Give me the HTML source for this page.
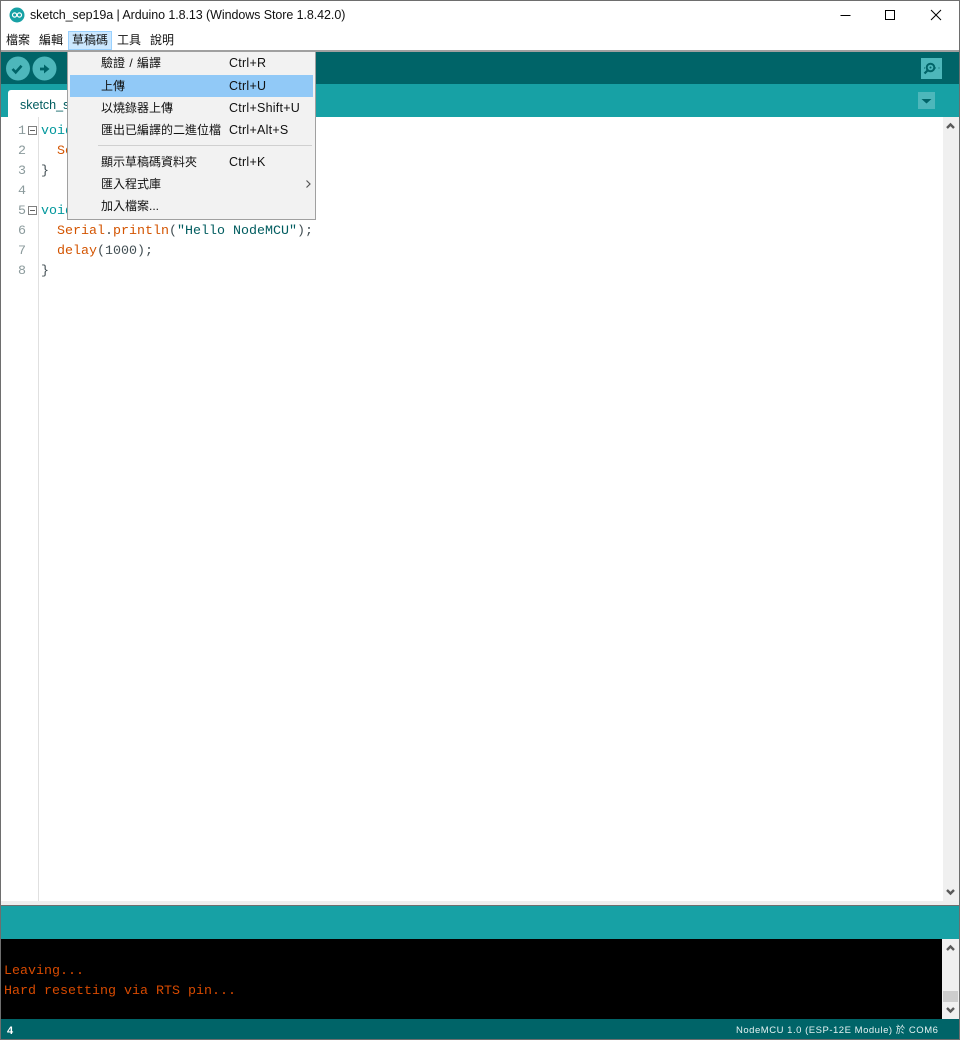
<!DOCTYPE html>
<html lang="zh-Hant"><head><meta charset="utf-8"><title>sketch_sep19a | Arduino 1.8.13</title>
<style>
*{box-sizing:border-box}
html,body{margin:0;padding:0;background:#fff}
body{width:960px;height:1040px;position:relative;overflow:hidden;font-family:"Liberation Sans","Noto Sans CJK TC",sans-serif;font-size:12px;color:#000}
.a{position:absolute}
.t{position:absolute;white-space:pre;line-height:20px}
.m{font-family:"Liberation Mono",monospace;font-size:13.333px;line-height:20px;white-space:pre;position:absolute}
.g{color:#8b9a9c;font-family:"Liberation Mono",monospace;font-size:13.333px;line-height:20px;position:absolute;left:18px}
.o{color:#d35400}.k{color:#00979c}.s{color:#005c5f}.c{color:#434f54}
.mi{position:absolute;left:101px;font-size:12px;line-height:20px;color:#111;white-space:pre}
.ms{position:absolute;left:229px;font-size:12.5px;letter-spacing:.25px;line-height:20px;color:#111;white-space:pre}
.fold{position:absolute;left:28px;width:9px;height:9px;border:1px solid #808080;background:#fff}
.fold:after{content:"";position:absolute;left:1px;top:3px;width:5px;height:1px;background:#606060}
</style></head><body>
<!-- window border -->
<div class="a" style="left:0;top:0;width:960px;height:1px;background:#6e6e6e;z-index:9"></div>
<div class="a" style="left:0;top:0;width:1px;height:1040px;background:#6e6e6e;z-index:9"></div>
<div class="a" style="left:959px;top:0;width:1px;height:1040px;background:#6e6e6e;z-index:9"></div>
<div class="a" style="left:0;top:1039px;width:960px;height:1px;background:#6e6e6e;z-index:9"></div>
<!-- title -->
<svg class="a" style="left:9px;top:7px" width="16" height="16" viewBox="0 0 16 16"><circle cx="8" cy="8" r="7.5" fill="#17a1a5"/><circle cx="5.6" cy="8" r="2.1" fill="none" stroke="#fff" stroke-width="1.2"/><circle cx="10.4" cy="8" r="2.1" fill="none" stroke="#fff" stroke-width="1.2"/></svg>
<div class="t" style="left:30px;top:5px;font-size:12.5px;letter-spacing:-.075px;color:#111">sketch_sep19a | Arduino 1.8.13 (Windows Store 1.8.42.0)</div>
<svg class="a" style="left:835px;top:8px" width="115" height="16" viewBox="0 0 115 16"><path d="M5.500 7.500H15.500" stroke="#000" fill="none"/><rect x="50.500" y="2.500" width="9" height="9" fill="none" stroke="#000"/><path d="M96 2L106 12M106 2L96 12" stroke="#000" fill="none"/></svg>
<!-- menubar -->
<div class="a" style="left:68px;top:31px;width:44px;height:19px;background:#cce8ff;border:1px solid #99d1ff"></div>
<div class="t" style="left:6px;top:30px;color:#111">檔案</div>
<div class="t" style="left:39px;top:30px;color:#111">編輯</div>
<div class="t" style="left:72px;top:30px;color:#111">草稿碼</div>
<div class="t" style="left:117px;top:30px;color:#111">工具</div>
<div class="t" style="left:150px;top:30px;color:#111">說明</div>
<div class="a" style="left:0;top:50px;width:960px;height:2px;background:#a0a0a0"></div>
<!-- toolbar -->
<div class="a" style="left:0;top:52px;width:960px;height:32px;background:#006468"></div>
<svg class="a" style="left:5px;top:55px" width="54" height="27" viewBox="0 0 54 27"><circle cx="13" cy="13.500" r="12" fill="#4db7bb"/><path d="M7.500 14L10.700 17.300L16.500 10.800" fill="none" stroke="#006468" stroke-width="2.600"/><circle cx="39.500" cy="13.500" r="12" fill="#4db7bb"/><path d="M35 14H40" fill="none" stroke="#006468" stroke-width="2.800"/><path d="M39 9.500L44.500 14L39 18.500Z" fill="#006468"/></svg>
<div class="a" style="left:921px;top:58px;width:21px;height:21px;background:#4db7bb"></div>
<svg class="a" style="left:921px;top:58px" width="21" height="21" viewBox="0 0 21 21"><circle cx="9.500" cy="9.500" r="3.800" fill="none" stroke="#006468" stroke-width="2"/><circle cx="9.500" cy="9.500" r="1" fill="#006468"/><path d="M6.500 12.500L3.500 15.500" stroke="#006468" stroke-width="2.200"/><path d="M3 10H4M14 10H15M17.500 10H18.500" stroke="#006468"/></svg>
<!-- tab strip -->
<div class="a" style="left:0;top:84px;width:960px;height:33px;background:#17a1a5"></div>
<div class="a" style="left:8px;top:90px;width:70px;height:27px;background:#fff;border-radius:3px 3px 0 0"></div>
<div class="t" style="left:20px;top:95px;font-size:12.5px;color:#005c5f">sketch_s</div>
<div class="a" style="left:918px;top:92px;width:17px;height:17px;background:#4db7bb"></div>
<svg class="a" style="left:918px;top:92px" width="17" height="17"><path d="M3.500 7H13.500L8.500 11.500Z" fill="#006468"/></svg>
<!-- editor -->
<div class="a" style="left:1px;top:117px;width:942px;height:786px;background:#fff"></div>
<div class="a" style="left:38px;top:117px;width:1px;height:784px;background:#e0e0e0"></div>
<div class="g" style="top:122px">1</div><div class="g" style="top:142px">2</div><div class="g" style="top:162px">3</div><div class="g" style="top:182px">4</div><div class="g" style="top:202px">5</div><div class="g" style="top:222px">6</div><div class="g" style="top:242px">7</div><div class="g" style="top:262px">8</div>
<div class="fold" style="top:126px"></div><div class="fold" style="top:206px"></div>
<div class="m k" style="left:41px;top:122px">void</div>
<div class="m o" style="left:57px;top:142px">Se</div>
<div class="m c" style="left:41px;top:162px">}</div>
<div class="m k" style="left:41px;top:202px">void</div>
<div class="m" style="left:57px;top:222px"><span class="o">Serial</span><span class="c">.</span><span class="o">println</span><span class="c">(</span><span class="s">"Hello NodeMCU"</span><span class="c">);</span></div>
<div class="m" style="left:57px;top:242px"><span class="o">delay</span><span class="c">(1000);</span></div>
<div class="m c" style="left:41px;top:262px">}</div>
<!-- editor scrollbar -->
<div class="a" style="left:943px;top:117px;width:16px;height:786px;background:#f0f0f0"></div>
<svg class="a" style="left:943px;top:117px" width="16" height="786"><path d="M4 11L7.500 7.500L11 11" fill="none" stroke="#5a5a5a" stroke-width="2.400"/><path d="M4 773L7.500 776.500L11 773" fill="none" stroke="#5a5a5a" stroke-width="2.400"/></svg>
<div class="a" style="left:1px;top:901px;width:958px;height:4px;background:#eeeeee"></div>
<div class="a" style="left:1px;top:905px;width:958px;height:1px;background:#6e6e6e"></div>
<!-- message strip -->
<div class="a" style="left:0;top:906px;width:960px;height:33px;background:#17a1a5"></div>
<!-- console -->
<div class="a" style="left:0;top:939px;width:942px;height:80px;background:#000"></div>
<div class="m" style="left:4px;top:962px;color:#d84a00">Leaving...</div>
<div class="m" style="left:4px;top:982px;color:#d84a00">Hard resetting via RTS pin...</div>
<div class="a" style="left:942px;top:939px;width:17px;height:80px;background:#f0f0f0"></div>
<svg class="a" style="left:942px;top:939px" width="17" height="80"><path d="M5 11L8.500 7.500L12 11" fill="none" stroke="#5a5a5a" stroke-width="2.400"/><rect x="1" y="52" width="15" height="11" fill="#cdcdcd"/><path d="M5 69L8.500 72.500L12 69" fill="none" stroke="#5a5a5a" stroke-width="2.400"/></svg>
<!-- status -->
<div class="a" style="left:0;top:1019px;width:960px;height:20px;background:#006468"></div>
<div class="t" style="left:7px;top:1021px;font-size:11px;font-weight:bold;line-height:20px;color:#fff;font-family:'Liberation Sans',sans-serif">4</div>
<div class="t" style="left:736px;top:1021px;font-size:9.500px;letter-spacing:.52px;color:#e4f2f2">NodeMCU 1.0 (ESP-12E Module) 於 COM6</div>
<!-- dropdown -->
<div class="a" style="left:67px;top:51px;width:249px;height:169px;background:#f2f2f2;border:1px solid #a0a0a0;z-index:5"></div>
<div style="position:absolute;left:0;top:0;z-index:6">
<div class="a" style="left:70px;top:75px;width:243px;height:22px;background:#91c9f7"></div>
<div class="mi" style="top:53px;word-spacing:1px">驗證 / 編譯</div><div class="ms" style="top:53px">Ctrl+R</div>
<div class="mi" style="top:76px">上傳</div><div class="ms" style="top:76px">Ctrl+U</div>
<div class="mi" style="top:98px">以燒錄器上傳</div><div class="ms" style="top:98px">Ctrl+Shift+U</div>
<div class="mi" style="top:120px">匯出已編譯的二進位檔</div><div class="ms" style="top:120px">Ctrl+Alt+S</div>
<div class="a" style="left:98px;top:145px;width:214px;height:1px;background:#d0d0d0"></div>
<div class="mi" style="top:152px">顯示草稿碼資料夾</div><div class="ms" style="top:152px">Ctrl+K</div>
<div class="mi" style="top:174px">匯入程式庫</div>
<svg class="a" style="left:305px;top:179px" width="8" height="10"><path d="M1.500 1.500L5 5L1.500 8.500" fill="none" stroke="#555" stroke-width="1.200"/></svg>
<div class="mi" style="top:196px">加入檔案...</div>
</div>
</body></html>
